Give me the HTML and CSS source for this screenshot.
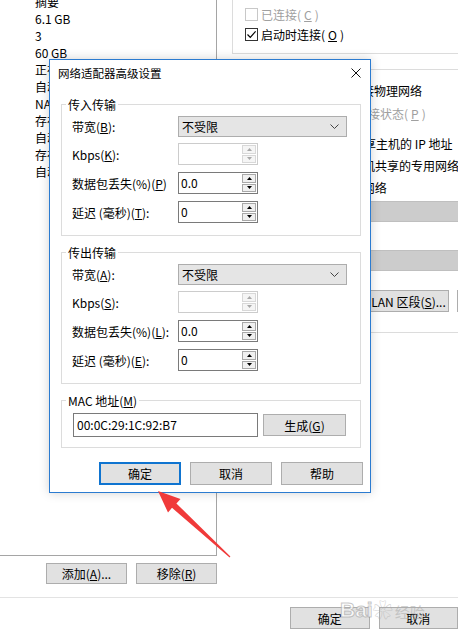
FILE: index.html
```html
<!DOCTYPE html>
<html lang="zh-CN">
<head>
    <meta charset="UTF-8">
    <meta name="viewport" content="width=device-width, initial-scale=1.0">
    <title>网络适配器高级设置</title>
    <link rel="stylesheet" href="styles.css">
</head>
<body>
    <div class="window">
        <div class="main">
            <div class="left">
                <div class="summary">
                    <div class="summary-list">
                        <div>摘要</div>
                        <div>6.1 GB</div>
                        <div>3</div>
                        <div>60 GB</div>
                        <div>正在使用文件</div>
                        <div>自动检测</div>
                        <div>NAT</div>
                        <div>存在</div>
                        <div>自动检测</div>
                        <div>存在</div>
                        <div>自动检测</div>
                    </div>
                </div>
                <div class="left-btns">
                    <button class="btn">添加(<u>A</u>)...</button>
                    <button class="btn">移除(<u>R</u>)</button>
                </div>
            </div>
            <div class="right">
                <div class="status-group">
                    <div class="check disabled"><span class="box"></span>已连接(<u>C</u>)</div>
                    <div class="check"><span class="box"><svg width="11" height="11" viewBox="0 0 11 11"><path d="M1.5 5.5 L4.3 8.3 L9.6 2.4" fill="none" stroke="#000" stroke-width="1.2"/></svg></span>启动时连接(<u>O</u>)</div>
                </div>
                <div class="net-group">
                    <div class="radio-row r1"><span class="radio"></span>桥接模式(<u>B</u>): 直接连接物理网络</div>
                    <div class="radio-row r2 disabled"><span class="box"></span>复制物理网络连接状态(<u>P</u>)</div>
                    <div class="radio-row r3"><span class="radio on"></span>NAT 模式(<u>N</u>): 用于共享主机的 IP 地址</div>
                    <div class="radio-row r4"><span class="radio"></span>仅主机模式(<u>H</u>): 与主机共享的专用网络</div>
                    <div class="radio-row r5"><span class="radio"></span>自定义(<u>U</u>): 特定虚拟网络</div>
                    <div class="combo"></div>
                    <div class="radio-row r6"><span class="radio"></span>LAN 区段(<u>L</u>):</div>
                    <div class="combo"></div>
                    <div class="net-btns">
                        <button class="btn tall">LAN 区段(<u>S</u>)...</button>
                        <button class="btn tall">高级(<u>V</u>)...</button>
                    </div>
                </div>
            </div>
        </div>
        <div class="footer">
            <button class="btn wide">确定</button>
            <button class="btn wide">取消</button>
        </div>
    </div>

    <div class="dialog">
        <div class="dialog-title">
            <span>网络适配器高级设置</span>
            <svg class="close" width="10" height="10" viewBox="0 0 10 10"><path d="M0.5 0.5 L9.5 9.5 M9.5 0.5 L0.5 9.5" stroke="#111" stroke-width="1"/></svg>
        </div>
        <div class="dialog-body">
            <fieldset class="group">
                <legend>传入传输</legend>
                <div class="group-inner">
                    <div class="field first">
                        <span>带宽(<u>B</u>):</span>
                        <div class="select"><span>不受限</span><svg width="9" height="5" viewBox="0 0 9 5"><path d="M0.5 0.5 L4.5 4.5 L8.5 0.5" fill="none" stroke="#444"/></svg></div>
                    </div>
                    <div class="field">
                        <span>Kbps(<u>K</u>):</span>
                        <div class="spin disabled"><span class="spin-val"></span><span class="spin-btns"><span class="spin-btn"><svg width="5" height="3"><path d="M0 3 L2.5 0 L5 3 Z"/></svg></span><span class="spin-btn"><svg width="5" height="3"><path d="M0 0 L2.5 3 L5 0 Z"/></svg></span></span></div>
                    </div>
                    <div class="field">
                        <span>数据包丢失(%)(<u>P</u>)</span>
                        <div class="spin"><span class="spin-val">0.0</span><span class="spin-btns"><span class="spin-btn"><svg width="5" height="3"><path d="M0 3 L2.5 0 L5 3 Z"/></svg></span><span class="spin-btn"><svg width="5" height="3"><path d="M0 0 L2.5 3 L5 0 Z"/></svg></span></span></div>
                    </div>
                    <div class="field">
                        <span>延迟 (毫秒)(<u>T</u>):</span>
                        <div class="spin"><span class="spin-val">0</span><span class="spin-btns"><span class="spin-btn"><svg width="5" height="3"><path d="M0 3 L2.5 0 L5 3 Z"/></svg></span><span class="spin-btn"><svg width="5" height="3"><path d="M0 0 L2.5 3 L5 0 Z"/></svg></span></span></div>
                    </div>
                </div>
            </fieldset>

            <fieldset class="group">
                <legend>传出传输</legend>
                <div class="group-inner">
                    <div class="field first">
                        <span>带宽(<u>A</u>):</span>
                        <div class="select"><span>不受限</span><svg width="9" height="5" viewBox="0 0 9 5"><path d="M0.5 0.5 L4.5 4.5 L8.5 0.5" fill="none" stroke="#444"/></svg></div>
                    </div>
                    <div class="field">
                        <span>Kbps(<u>S</u>):</span>
                        <div class="spin disabled"><span class="spin-val"></span><span class="spin-btns"><span class="spin-btn"><svg width="5" height="3"><path d="M0 3 L2.5 0 L5 3 Z"/></svg></span><span class="spin-btn"><svg width="5" height="3"><path d="M0 0 L2.5 3 L5 0 Z"/></svg></span></span></div>
                    </div>
                    <div class="field">
                        <span>数据包丢失(%)(<u>L</u>):</span>
                        <div class="spin"><span class="spin-val">0.0</span><span class="spin-btns"><span class="spin-btn"><svg width="5" height="3"><path d="M0 3 L2.5 0 L5 3 Z"/></svg></span><span class="spin-btn"><svg width="5" height="3"><path d="M0 0 L2.5 3 L5 0 Z"/></svg></span></span></div>
                    </div>
                    <div class="field">
                        <span>延迟 (毫秒)(<u>E</u>):</span>
                        <div class="spin"><span class="spin-val">0</span><span class="spin-btns"><span class="spin-btn"><svg width="5" height="3"><path d="M0 3 L2.5 0 L5 3 Z"/></svg></span><span class="spin-btn"><svg width="5" height="3"><path d="M0 0 L2.5 3 L5 0 Z"/></svg></span></span></div>
                    </div>
                </div>
            </fieldset>

            <fieldset class="group">
                <legend>MAC 地址(<u>M</u>)</legend>
                <div class="group-inner mac">
                    <div class="mac-row">
                        <div class="mac-input">00:0C:29:1C:92:B7</div>
                        <button class="btn gen">生成(<u>G</u>)</button>
                    </div>
                </div>
            </fieldset>

            <div class="dialog-btns">
                <button class="btn dlg default">确定</button>
                <button class="btn dlg">取消</button>
                <button class="btn dlg">帮助</button>
            </div>
        </div>
    </div>

    <svg class="arrow" width="458" height="629" viewBox="0 0 458 629">
        <polygon points="158,491 180.5,499 176.4,503.4 230.4,556.6 229.6,557.4 172,507.8 168,512.5" fill="#f03a3a"/>
    </svg>

    <div class="watermark"><span class="wm-bai">Bai</span><span class="wm-paw">&#x2740;</span><span class="wm-jy">经验</span></div>
</body>
</html>
```

FILE: styles.css
```css
* {
    box-sizing: border-box;
}
body {
    margin: 0;
    width: 458px;
    height: 629px;
    overflow: hidden;
    position: relative;
    background: #fff;
    font-family: "Noto Sans CJK SC", "Microsoft YaHei", sans-serif;
    font-size: 12px;
    line-height: 17px;
    color: #000;
}
u {
    text-underline-offset: 1px;
}
.window {
    display: flex;
    flex-direction: column;
    height: 629px;
}
.main {
    display: flex;
    height: 597px;
}
.left {
    width: 217px;
    flex: none;
    display: flex;
    flex-direction: column;
}
.summary {
    height: 556px;
    border-right: 1px solid #a5a5a5;
    border-bottom: 1px solid #a5a5a5;
    padding-left: 35px;
    overflow: hidden;
}
.summary-list {
    margin-top: -7px;
}
.summary-list div {
    height: 17px;
    white-space: nowrap;
}
.left-btns {
    display: flex;
    justify-content: flex-end;
    gap: 9px;
    padding-top: 7px;
}
.btn {
    width: 81px;
    height: 21px;
    padding: 0;
    background: #e1e1e1;
    border: 1px solid #adadad;
    font: inherit;
    line-height: 19px;
    color: #000;
    white-space: nowrap;
}
.btn.tall {
    height: 22px;
}
.btn.wide {
    width: 82px;
    height: 22px;
}

/* right side of the settings window */
.right {
    flex: 1;
    min-width: 0;
    padding-left: 15px;
    overflow: hidden;
}
.status-group {
    width: 420px;
    height: 54px;
    border: 1px solid #dcdcdc;
    border-top: none;
    padding: 4px 0 0 12px;
}
.check, .radio-row {
    display: flex;
    align-items: center;
    gap: 3px;
    height: 20px;
    white-space: nowrap;
}
.box {
    width: 13px;
    height: 13px;
    flex: none;
    border: 1px solid #333;
    background: #fff;
    display: flex;
    align-items: center;
    justify-content: center;
}
.disabled {
    color: #a0a0a0;
}
.disabled .box {
    border-color: #c8c8c8;
}
.net-group {
    width: 420px;
    margin-top: 15px;
    border: 1px solid #dcdcdc;
    padding: 0 0 20px 0;
    display: flex;
    flex-direction: column;
}
.radio {
    width: 13px;
    height: 13px;
    flex: none;
    border: 1px solid #333;
    border-radius: 50%;
    margin-right: 1px;
}
.radio.on {
    background: radial-gradient(circle, #000 0 3px, #fff 3.5px);
}
.r1 { margin-top: 10px; }
.r2 { margin-top: 3px; padding-left: 35px; }
.r3 { margin-top: 10px; }
.r4 { margin-top: 2px; }
.r5 { margin-top: 2px; }
.r6 { margin-top: 4px; }
.combo {
    height: 21px;
    margin: 4px 0 0 17px;
    background: #cccccc;
    border: 1px solid #bfbfbf;
}
.net-btns {
    display: flex;
    gap: 8px;
    margin-top: 19px;
    padding-left: 135px;
}
.footer {
    border-top: 1px solid #e3e3e3;
    display: flex;
    gap: 9px;
    padding: 9px 0 0 290px;
}

/* dialog */
.dialog {
    position: absolute;
    left: 49px;
    top: 59px;
    width: 322px;
    height: 434px;
    background: #fff;
    border: 1px solid #2b7bd0;
    box-shadow: 0 0 10px rgba(0, 0, 0, 0.18);
}
.dialog-title {
    height: 36px;
    display: flex;
    justify-content: space-between;
    align-items: flex-start;
    padding: 4px 9px 0 8px;
    line-height: 18px;
    font-size: 11.5px;
}
.close {
    margin-top: 4px;
}
.dialog-body {
    padding: 0 9px 0 11px;
}
.group {
    width: 300px;
    min-width: 0;
    margin: 0;
    padding: 0;
    border: 1px solid #dcdcdc;
}
.group + .group {
    margin-top: 8px;
}
.group legend {
    margin-left: 4px;
    padding: 0 2px;
    line-height: 17px;
}
.group-inner {
    padding: 3px 10px 12px 10px;
    display: flex;
    flex-direction: column;
    gap: 7px;
}
.group-inner.mac {
    padding: 4px 10px 10px 11px;
}
.field {
    display: grid;
    grid-template-columns: 106px auto;
    align-items: center;
    white-space: nowrap;
}
.field.first {
    margin-bottom: -1px;
}
.select {
    width: 169px;
    height: 21px;
    background: #e5e5e5;
    border: 1px solid #adadad;
    display: flex;
    align-items: center;
    justify-content: space-between;
    padding: 0 7px 0 3px;
}
.spin {
    width: 80px;
    height: 22px;
    border: 1px solid #7a7a7a;
    background: #fff;
    display: flex;
}
.spin-val {
    flex: 1;
    padding-left: 2px;
    line-height: 19px;
}
.spin-btns {
    width: 16px;
    display: flex;
    flex-direction: column;
    gap: 1px;
    padding: 1px;
}
.spin-btn {
    flex: 1;
    background: #f0f0f0;
    border: 1px solid #a8a8a8;
    display: flex;
    align-items: center;
    justify-content: center;
}
.spin-btn svg {
    fill: #000;
}
.spin.disabled {
    border-color: #cccccc;
}
.spin.disabled .spin-btn {
    border-color: #d8d8d8;
    background: #f5f5f5;
}
.spin.disabled .spin-btn svg {
    fill: #a8a8a8;
}
.mac-row {
    display: flex;
    align-items: center;
    gap: 5px;
}
.mac-input {
    width: 185px;
    height: 24px;
    border: 1px solid #7a7a7a;
    padding-left: 3px;
    line-height: 21px;
}
.btn.gen {
    width: 83px;
    height: 22px;
}
.dialog-btns {
    display: flex;
    justify-content: flex-end;
    gap: 9px;
    margin: 14px -2px 0 0;
}
.btn.dlg {
    width: 82px;
    height: 23px;
}
.btn.default {
    border: 2px solid #0f74d0;
    line-height: 19px;
}

/* overlays */
.arrow {
    position: absolute;
    left: 0;
    top: 0;
    pointer-events: none;
}
.watermark {
    position: absolute;
    left: 340px;
    top: 598px;
    display: flex;
    align-items: flex-end;
    color: rgba(255, 255, 255, 0.75);
    pointer-events: none;
}
.wm-bai {
    font-family: "Liberation Sans", Arial, sans-serif;
    font-size: 21px;
    font-weight: bold;
    line-height: 24px;
    -webkit-text-stroke: 1px rgba(150, 150, 150, 0.55);
}
.wm-paw {
    font-size: 20px;
    line-height: 24px;
    color: rgba(170, 170, 170, 0.5);
}
.wm-jy {
    font-size: 15px;
    line-height: 20px;
    color: rgba(170, 170, 170, 0.55);
    margin-left: 2px;
}
```
